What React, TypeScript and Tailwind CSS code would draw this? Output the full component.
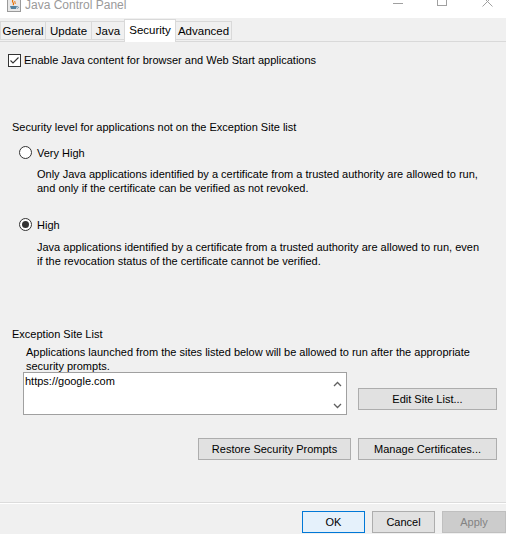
import React from "react";

function Chevron({ up }: { up?: boolean }) {
  return (
    <svg width="9" height="6" viewBox="0 0 9 6" className="block">
      {up ? (
        <path d="M1 5 L4.5 1.5 L8 5" fill="none" stroke="#606060" strokeWidth="1.3" />
      ) : (
        <path d="M1 1 L4.5 4.5 L8 1" fill="none" stroke="#606060" strokeWidth="1.3" />
      )}
    </svg>
  );
}

function Radio({ checked }: { checked?: boolean }) {
  return (
    <div className="w-[13px] h-[13px] rounded-full border border-[#333333] bg-white flex items-center justify-center shrink-0">
      {checked && <div className="w-[7px] h-[7px] rounded-full bg-[#333333]" />}
    </div>
  );
}

function Btn({ label, className }: { label: string; className?: string }) {
  return (
    <div
      className={
        "h-[22px] flex items-center justify-center border border-[#adadad] bg-[#e1e1e1] text-black " +
        (className || "")
      }
    >
      {label}
    </div>
  );
}

export default function App() {
  return (
    <div className="w-[506px] h-[534px] overflow-hidden bg-[#f0f0f0] flex flex-col text-[11px] leading-[14px] text-black font-['Liberation_Sans',Arial,sans-serif]">
      {/* Title bar */}
      <div className="h-[18px] bg-white shrink-0 overflow-hidden relative">
        <div className="-mt-[4px] h-[18px] flex items-center">
          <div className="ml-[6px] w-[16px] h-[16px] flex items-center justify-center">
            <svg width="14" height="14" viewBox="0 0 14 14">
              <rect x="0.5" y="0.5" width="13" height="13" fill="#e8e8e8" stroke="#9a9a9a" />
              <path d="M6 2 C4 4 8 5 6 7" fill="none" stroke="#e76f00" strokeWidth="1.2" />
              <path d="M8 3 C7 4 9 5 8 6" fill="none" stroke="#e76f00" strokeWidth="1" />
              <path d="M3 8 L10 8 L9 11 L4 11 Z" fill="#5382a1" />
              <path d="M10 8.5 C12 8.5 12 10 10 10.5" fill="none" stroke="#5382a1" strokeWidth="0.8" />
            </svg>
          </div>
          <span className="ml-[3px] text-[#9a9a9a] text-[12px]">Java Control Panel</span>
        </div>
        <div className="absolute left-[393px] top-[3px] w-[10px] h-px bg-[#a0a0a0]" />
        <div className="absolute left-[437px] -top-[4px] w-[10px] h-[10px] border border-[#a0a0a0]" />
        <svg className="absolute left-[482px] -top-[4px]" width="11" height="11" viewBox="0 0 11 11">
          <path d="M0.5 0.5 L10.5 10.5 M10.5 0.5 L0.5 10.5" stroke="#a0a0a0" strokeWidth="1" />
        </svg>
      </div>

      {/* Tabs */}
      <div className="h-[24px] shrink-0 flex items-end border-b border-[#d9d9d9] text-[11.5px]">
        <div className="w-[45px] h-[19px] mb-[1px] border border-r-0 border-[#d9d9d9] flex items-center justify-center">General</div>
        <div className="w-[46px] h-[19px] mb-[1px] border border-r-0 border-[#d9d9d9] flex items-center justify-center">Update</div>
        <div className="w-[33px] h-[19px] mb-[1px] border border-r-0 border-[#d9d9d9] flex items-center justify-center">Java</div>
        <div className="w-[52px] h-[23px] -mb-px bg-white border border-b-0 border-[#d9d9d9] flex items-start justify-center pt-[3px]">Security</div>
        <div className="w-[56px] h-[19px] mb-[1px] border border-l-0 border-[#d9d9d9] flex items-center justify-center">Advanced</div>
      </div>

      {/* Panel */}
      <div className="flex-1 flex flex-col">
        <div className="mt-[11px] ml-[8px] h-[14px] flex items-center gap-[3px]">
          <div className="w-[13px] h-[13px] border border-[#333333] bg-white flex items-center justify-center">
            <svg width="11" height="11" viewBox="0 0 11 11">
              <path d="M1.5 5.5 L4 8 L9.5 2.5" fill="none" stroke="#333333" strokeWidth="1.1" />
            </svg>
          </div>
          <span>Enable Java content for browser and Web Start applications</span>
        </div>

        <div className="mt-[53px] ml-[12px]">Security level for applications not on the Exception Site list</div>

        <div className="mt-[12px] ml-[19px] h-[13px] flex items-center gap-[5px]">
          <Radio />
          <span>Very High</span>
        </div>
        <div className="mt-[8px] ml-[37px] whitespace-nowrap">
          <div>Only Java applications identified by a certificate from a trusted authority are allowed to run,</div>
          <div>and only if the certificate can be verified as not revoked.</div>
        </div>

        <div className="mt-[23px] ml-[19px] h-[13px] flex items-center gap-[5px]">
          <Radio checked />
          <span>High</span>
        </div>
        <div className="mt-[9px] ml-[37px] whitespace-nowrap">
          <div>Java applications identified by a certificate from a trusted authority are allowed to run, even</div>
          <div>if the revocation status of the certificate cannot be verified.</div>
        </div>

        <div className="mt-[59px] ml-[12px]">Exception Site List</div>
        <div className="mt-[4px] ml-[26px] whitespace-nowrap">
          <div>Applications launched from the sites listed below will be allowed to run after the appropriate</div>
          <div>security prompts.</div>
        </div>

        <div className="-mt-[1px] flex items-start">
          <div className="ml-[23px] w-[324px] h-[43px] border border-[#a0a0a0] bg-white flex">
            <div className="flex-1 pl-[1px] pt-[1px]">https://google.com</div>
            <div className="w-[17px] flex flex-col items-center justify-between pt-[8px] pb-[5px]">
              <Chevron up />
              <Chevron />
            </div>
          </div>
          <Btn label="Edit Site List..." className="ml-[11px] mt-[16px] w-[139px]" />
        </div>

        <div className="mt-[23px] flex justify-end gap-[7px] pr-[9px]">
          <Btn label="Restore Security Prompts" className="w-[153px]" />
          <Btn label="Manage Certificates..." className="w-[139px]" />
        </div>

        <div className="mt-[42px] h-px bg-[#dcdcdc]" />
        <div className="h-px bg-white" />

        <div className="mt-[7px] flex justify-end gap-[7px] pr-0">
          <div className="w-[63px] h-[22px] flex items-center justify-center border border-[#0078d7] bg-[#e5f1fb]">OK</div>
          <Btn label="Cancel" className="w-[63px]" />
          <div className="w-[64px] h-[22px] flex items-center justify-center border border-[#bfbfbf] bg-[#cccccc] text-[#838383]">Apply</div>
        </div>
      </div>
    </div>
  );
}
